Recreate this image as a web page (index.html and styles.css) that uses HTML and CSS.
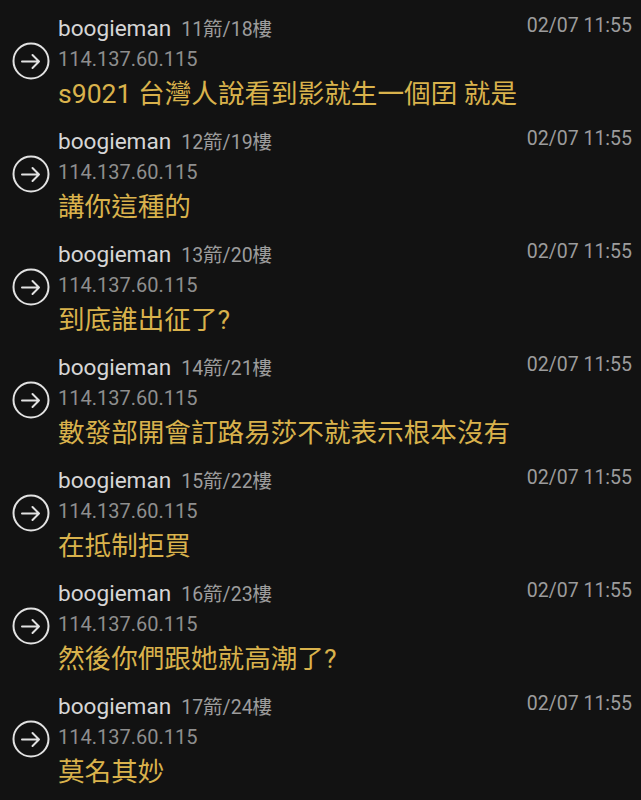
FILE: index.html
```html
<!DOCTYPE html>
<html lang="zh-Hant">
<head>
<meta charset="utf-8">
<title>推文</title>
<link rel="stylesheet" href="styles.css">
</head>
<body>
<div class="list">
  <div class="entry">
    <svg class="icon" viewBox="0 0 38 38" width="38" height="38"><circle cx="19" cy="19" r="17.5"/><path d="M10 19.5H27M20.5 13L27 19.5L20.5 26"/></svg>
    <div class="body">
      <div class="head"><div class="who"><span class="name">boogieman</span><span class="meta">11箭/18樓</span></div><span class="date">02/07 11:55</span></div>
      <div class="ip">114.137.60.115</div>
      <div class="text">s9021 台灣人說看到影就生一個囝 就是</div>
    </div>
  </div>
  <div class="entry">
    <svg class="icon" viewBox="0 0 38 38" width="38" height="38"><circle cx="19" cy="19" r="17.5"/><path d="M10 19.5H27M20.5 13L27 19.5L20.5 26"/></svg>
    <div class="body">
      <div class="head"><div class="who"><span class="name">boogieman</span><span class="meta">12箭/19樓</span></div><span class="date">02/07 11:55</span></div>
      <div class="ip">114.137.60.115</div>
      <div class="text">講你這種的</div>
    </div>
  </div>
  <div class="entry">
    <svg class="icon" viewBox="0 0 38 38" width="38" height="38"><circle cx="19" cy="19" r="17.5"/><path d="M10 19.5H27M20.5 13L27 19.5L20.5 26"/></svg>
    <div class="body">
      <div class="head"><div class="who"><span class="name">boogieman</span><span class="meta">13箭/20樓</span></div><span class="date">02/07 11:55</span></div>
      <div class="ip">114.137.60.115</div>
      <div class="text">到底誰出征了?</div>
    </div>
  </div>
  <div class="entry">
    <svg class="icon" viewBox="0 0 38 38" width="38" height="38"><circle cx="19" cy="19" r="17.5"/><path d="M10 19.5H27M20.5 13L27 19.5L20.5 26"/></svg>
    <div class="body">
      <div class="head"><div class="who"><span class="name">boogieman</span><span class="meta">14箭/21樓</span></div><span class="date">02/07 11:55</span></div>
      <div class="ip">114.137.60.115</div>
      <div class="text">數發部開會訂路易莎不就表示根本沒有</div>
    </div>
  </div>
  <div class="entry">
    <svg class="icon" viewBox="0 0 38 38" width="38" height="38"><circle cx="19" cy="19" r="17.5"/><path d="M10 19.5H27M20.5 13L27 19.5L20.5 26"/></svg>
    <div class="body">
      <div class="head"><div class="who"><span class="name">boogieman</span><span class="meta">15箭/22樓</span></div><span class="date">02/07 11:55</span></div>
      <div class="ip">114.137.60.115</div>
      <div class="text">在抵制拒買</div>
    </div>
  </div>
  <div class="entry">
    <svg class="icon" viewBox="0 0 38 38" width="38" height="38"><circle cx="19" cy="19" r="17.5"/><path d="M10 19.5H27M20.5 13L27 19.5L20.5 26"/></svg>
    <div class="body">
      <div class="head"><div class="who"><span class="name">boogieman</span><span class="meta">16箭/23樓</span></div><span class="date">02/07 11:55</span></div>
      <div class="ip">114.137.60.115</div>
      <div class="text">然後你們跟她就高潮了?</div>
    </div>
  </div>
  <div class="entry">
    <svg class="icon" viewBox="0 0 38 38" width="38" height="38"><circle cx="19" cy="19" r="17.5"/><path d="M10 19.5H27M20.5 13L27 19.5L20.5 26"/></svg>
    <div class="body">
      <div class="head"><div class="who"><span class="name">boogieman</span><span class="meta">17箭/24樓</span></div><span class="date">02/07 11:55</span></div>
      <div class="ip">114.137.60.115</div>
      <div class="text">莫名其妙</div>
    </div>
  </div>
</div>
</body>
</html>
```
FILE: styles.css
```css
html, body {
  margin: 0;
  padding: 0;
  background: #121212;
}
body {
  font-family: Roboto, "Noto Sans CJK TC", sans-serif;
  width: 641px;
  height: 800px;
  overflow: hidden;
}
.list {
  display: flex;
  flex-direction: column;
}
.entry {
  display: flex;
  align-items: center;
  gap: 8px;
  height: 113px;
  box-sizing: border-box;
  padding: 14px 9px 0 12px;
}
.icon {
  flex: none;
  fill: none;
  stroke: #e2e2e2;
  stroke-width: 2;
  stroke-linecap: round;
  stroke-linejoin: round;
  margin-top: -5px;
}
.body {
  flex: 1;
  display: flex;
  flex-direction: column;
  align-self: flex-start;
}
.head {
  display: flex;
  align-items: flex-start;
}
.who {
  line-height: 29px;
  white-space: nowrap;
}
.name {
  font-size: 22.6px;
  color: #d6d6d6;
}
.meta {
  margin-left: 10px;
  font-size: 19.5px;
  color: #9c9c9c;
}
.date {
  margin-left: auto;
  font-size: 19.5px;
  line-height: 23px;
  color: #9c9c9c;
}
.ip {
  font-size: 20px;
  line-height: 28px;
  color: #8e8e8e;
}
.text {
  margin-top: 1px;
  font-size: 26.6px;
  line-height: 39px;
  color: #d9b24c;
  white-space: nowrap;
}
```
